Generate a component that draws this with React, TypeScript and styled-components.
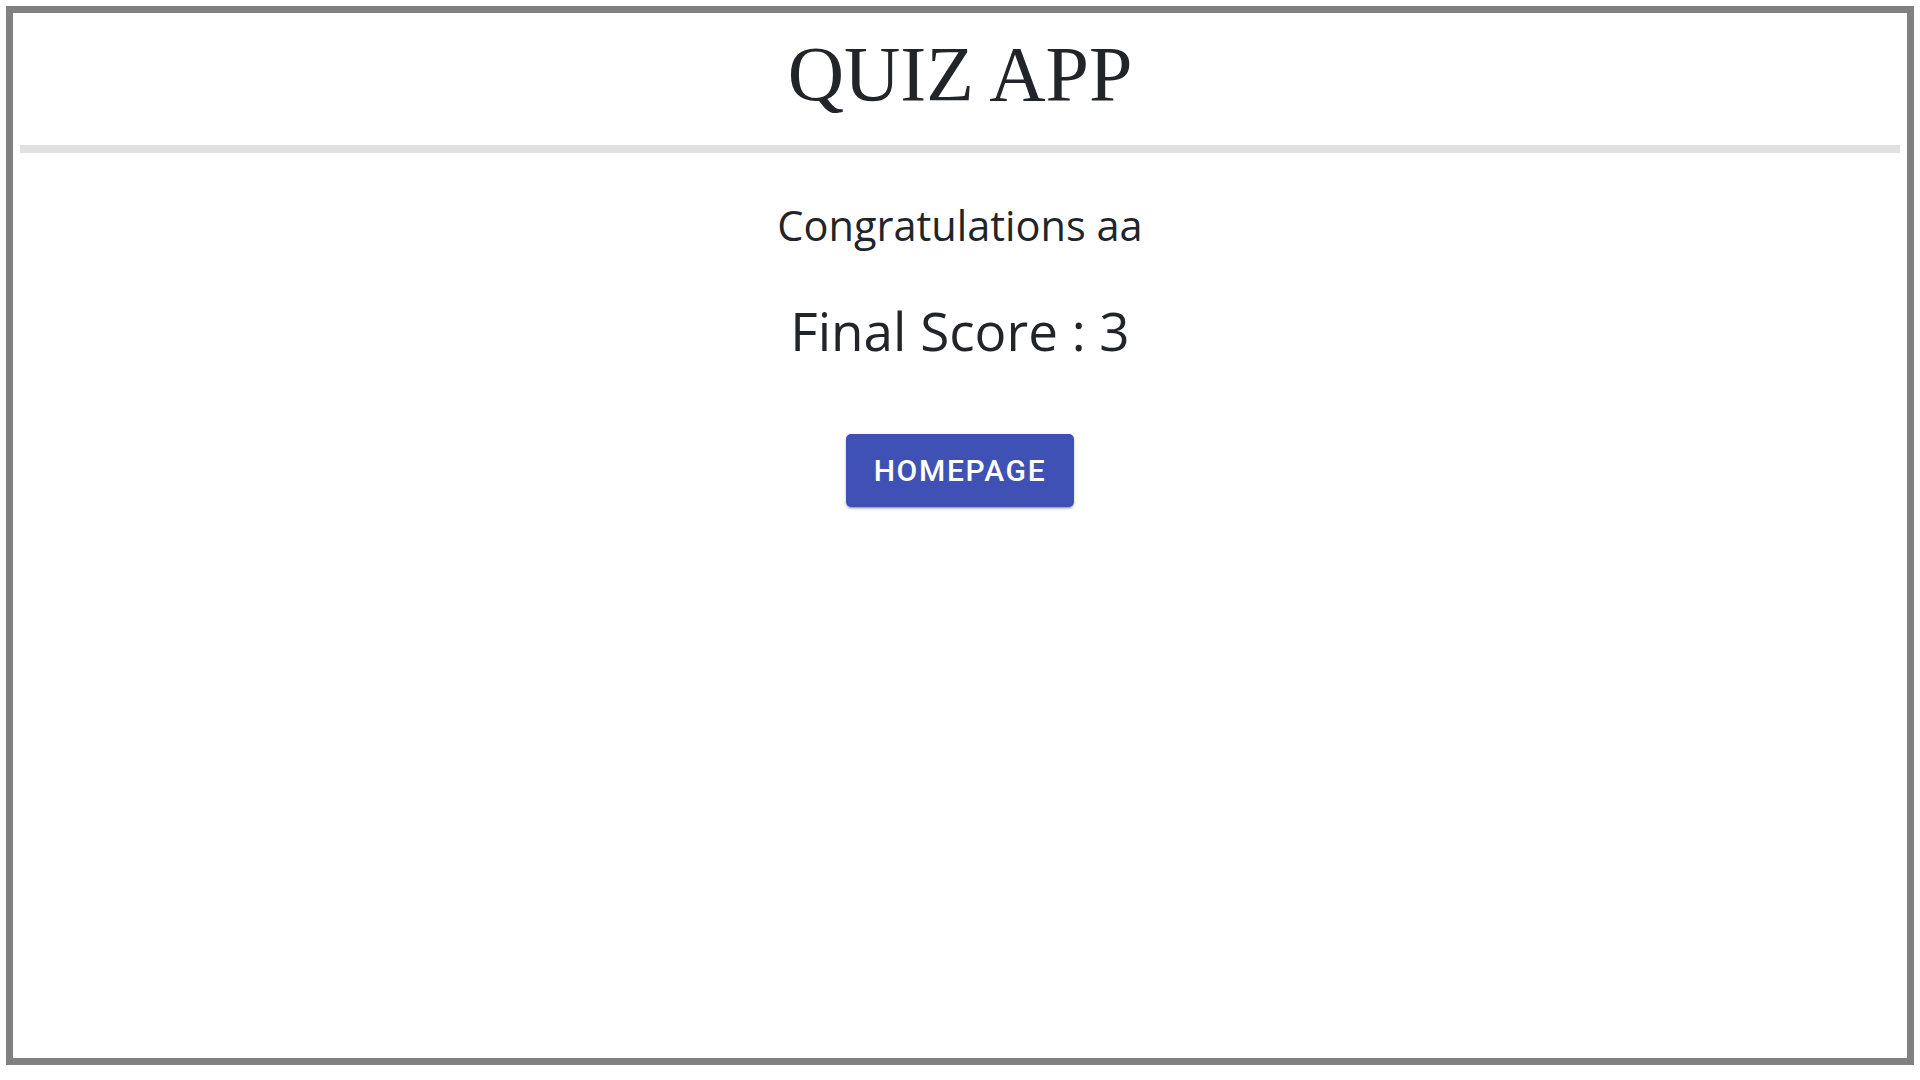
import React from "react";
import styled, { createGlobalStyle } from "styled-components";

const Global = createGlobalStyle`
  html, body { margin: 0; padding: 0; background: #ffffff; }
  body { font-family: "Open Sans", "Noto Sans", sans-serif; color: #212529; }
`;

const Frame = styled.div`
  margin: 6px;
  height: 1045px;
  border: 7px solid #808080;
  display: flex;
  flex-direction: column;
  box-sizing: content-box;
`;

const Header = styled.header`
  display: flex;
  flex-direction: column;
  align-items: center;
  padding: 0 7px;
`;

const Title = styled.h1`
  margin: 0;
  height: 132px;
  display: flex;
  align-items: center;
  justify-content: center;
  font-family: "Liberation Serif", "DejaVu Serif", serif;
  font-weight: 400;
  font-size: 78px;
  color: #212529;
  line-height: 1;
  padding-bottom: 10px;
  box-sizing: border-box;
`;

const Divider = styled.hr`
  align-self: stretch;
  margin: 0;
  border: none;
  height: 8px;
  background: #e0e0e0;
`;

const Result = styled.main`
  display: flex;
  flex-direction: column;
  align-items: center;
`;

const Greeting = styled.div`
  margin-top: 48px;
  font-size: 41.5px;
  line-height: 1.2;
`;

const Score = styled.div`
  margin-top: 48px;
  font-size: 53px;
  line-height: 1.2;
`;

const HomeButton = styled.button`
  margin-top: 72px;
  width: 228px;
  height: 73px;
  border: none;
  border-radius: 5px;
  background: #3f51b5;
  color: #ffffff;
  font-family: Roboto, "Liberation Sans", sans-serif;
  font-weight: 500;
  font-size: 30px;
  letter-spacing: 1.7px;
  text-transform: uppercase;
  cursor: pointer;
  box-shadow: 0px 3px 1px -2px rgba(0,0,0,0.2), 0px 2px 2px 0px rgba(0,0,0,0.14), 0px 1px 5px 0px rgba(0,0,0,0.12);
`;

export default function App() {
  return (
    <>
      <Global />
      <Frame>
        <Header>
          <Title>QUIZ APP</Title>
          <Divider />
        </Header>
        <Result>
          <Greeting>Congratulations aa</Greeting>
          <Score>Final Score : 3</Score>
          <HomeButton>Homepage</HomeButton>
        </Result>
      </Frame>
    </>
  );
}
